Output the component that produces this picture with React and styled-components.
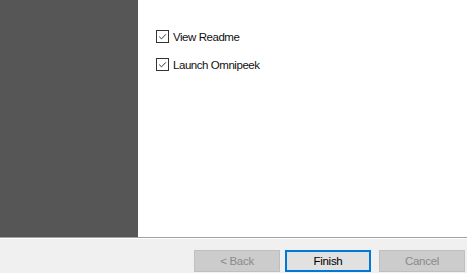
import React from "react";
import styled, { createGlobalStyle } from "styled-components";

const Global = createGlobalStyle`
  html, body { margin: 0; padding: 0; background: #f0f0f0; }
  body { font-family: "Liberation Sans", Arial, sans-serif; }
`;

const Window = styled.div`
  width: 467px;
  height: 273px;
  display: flex;
  flex-direction: column;
  overflow: hidden;
`;

const Main = styled.div`
  display: flex;
  height: 237px;
  flex: none;
`;

const SidePanel = styled.div`
  width: 138px;
  background: #555655;
  flex: none;
`;

const Content = styled.div`
  flex: 1;
  background: #ffffff;
  padding: 30px 0 0 18px;
  display: flex;
  flex-direction: column;
  gap: 15px;
`;

const Option = styled.label`
  display: flex;
  align-items: center;
  gap: 4px;
  height: 13px;
  font-size: 11.5px;
  letter-spacing: -0.45px;
  color: #111;
`;

const Box = styled.span`
  width: 11px;
  height: 11px;
  border: 1px solid #333333;
  background: #fff;
  display: flex;
  align-items: center;
  justify-content: center;
  flex: none;
`;

const Separator = styled.div`
  height: 1px;
  background: #a0a0a0;
  flex: none;
`;

const Footer = styled.div`
  flex: 1;
  background: #f0f0f0;
  display: flex;
  align-items: flex-start;
  padding: 11px 2px 0 194px;
  border-top: 1px solid #ffffff;
`;

const Button = styled.div`
  box-sizing: border-box;
  width: 86px;
  height: 22px;
  margin-left: ${(p) => p.$gap || 0}px;
  display: flex;
  align-items: center;
  justify-content: center;
  font-size: 11.5px;
  letter-spacing: -0.3px;
  background: ${(p) => (p.$disabled ? "#cccccc" : "#e1e1e1")};
  border: ${(p) =>
    p.$primary ? "2px solid #0078d7" : `1px solid ${p.$disabled ? "#bfbfbf" : "#adadad"}`};
  color: ${(p) => (p.$disabled ? "#8a8a8a" : "#000")};
`;

const Check = () => (
  <svg width="9" height="9" viewBox="0 0 9 9">
    <path d="M1.2 4.6 L3.5 6.9 L7.9 2.3" fill="none" stroke="#333" strokeWidth="1" />
  </svg>
);

export default function App() {
  return (
    <>
      <Global />
      <Window>
        <Main>
          <SidePanel />
          <Content>
            <Option>
              <Box>
                <Check />
              </Box>
              View Readme
            </Option>
            <Option>
              <Box>
                <Check />
              </Box>
              Launch Omnipeek
            </Option>
          </Content>
        </Main>
        <Separator />
        <Footer>
          <Button $disabled>&lt; Back</Button>
          <Button $primary $gap={5}>Finish</Button>
          <Button $disabled $gap={8}>Cancel</Button>
        </Footer>
      </Window>
    </>
  );
}
